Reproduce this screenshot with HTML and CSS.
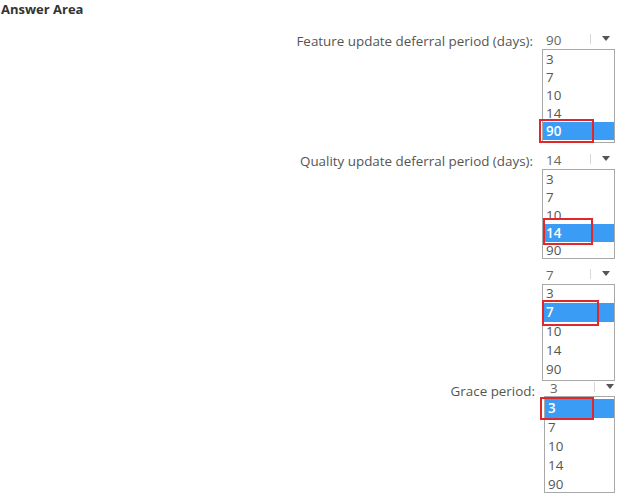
FILE: index.html
```html
<!DOCTYPE html>
<html>
<head>
<meta charset="utf-8">
<link rel="stylesheet" href="styles.css">
</head>
<body>
<div class="page">
  <h1 class="title">Answer Area</h1>
  <div class="area">
    <div class="group g1">
      <div class="label">Feature update deferral period (days):</div>
      <div class="dd">
        <div class="dd-head"><span class="val">90</span><span class="sep"></span><span class="arrow"></span></div>
        <ul class="dd-list">
          <li>3</li><li>7</li><li>10</li><li>14</li><li class="sel">90<span class="mark"></span></li>
        </ul>
      </div>
    </div>
    <div class="group g2">
      <div class="label">Quality update deferral period (days):</div>
      <div class="dd">
        <div class="dd-head"><span class="val">14</span><span class="sep"></span><span class="arrow"></span></div>
        <ul class="dd-list">
          <li>3</li><li>7</li><li>10</li><li class="sel">14<span class="mark"></span></li><li>90</li>
        </ul>
      </div>
    </div>
    <div class="group g3">
      <div class="label"></div>
      <div class="dd">
        <div class="dd-head"><span class="val">7</span><span class="sep"></span><span class="arrow"></span></div>
        <ul class="dd-list">
          <li>3</li><li class="sel">7<span class="mark"></span></li><li>10</li><li>14</li><li>90</li>
        </ul>
      </div>
    </div>
    <div class="group g4">
      <div class="label">Grace period:</div>
      <div class="dd">
        <div class="dd-head"><span class="val">3</span><span class="sep"></span><span class="arrow"></span></div>
        <ul class="dd-list">
          <li class="sel">3<span class="mark"></span></li><li>7</li><li>10</li><li>14</li><li>90</li>
        </ul>
      </div>
    </div>
  </div>
</div>
</body>
</html>
```
FILE: styles.css
```css
html, body {
  margin: 0;
  padding: 0;
  background: #ffffff;
}
.page {
  font-family: "Open Sans", "Noto Sans", sans-serif;
  color: #555;
}
.title {
  margin: 0;
  padding: 1px 0 0 1px;
  font-size: 13px;
  font-weight: 700;
  line-height: 16px;
  color: #333;
}
.area {
  display: flex;
  flex-direction: column;
  align-items: flex-end;
  padding-right: 15px;
}
.group {
  display: flex;
  align-items: flex-start;
  gap: 9px;
}
.label {
  font-size: 13.4px;
  line-height: 17px;
  color: #555;
  padding-top: 1px;
}
.dd {
  width: 73px;
}
.dd-head {
  height: 17px;
  display: flex;
  align-items: center;
  font-size: 13.4px;
  color: #666;
  padding-left: 4px;
  box-sizing: border-box;
}
.val {
  width: 44px;
  line-height: 17px;
}
.sep {
  width: 1px;
  height: 10px;
  background: #d8d8d8;
  margin-top: -4px;
}
.arrow {
  margin-left: 11px;
  margin-top: -4px;
  width: 0;
  height: 0;
  border-left: 4px solid transparent;
  border-right: 4px solid transparent;
  border-top: 5px solid #555;
}
.dd-list {
  list-style: none;
  margin: 0;
  padding: 0;
  border: 1px solid #a9a9a9;
  box-sizing: border-box;
}
.dd-list li {
  height: 18px;
  line-height: 18px;
  padding-left: 3px;
  font-size: 13.4px;
  color: #555;
  position: relative;
}
.dd-list li.sel {
  background: #3a9cf5;
  color: #fff;
  font-weight: 600;
}
.mark {
  position: absolute;
  left: -4px;
  top: -3px;
  width: 55px;
  height: 24px;
  border: 2px solid #e0282c;
  box-sizing: border-box;
}
.g1 {
  margin-top: 15px;
}
.g1 .dd-list {
  height: 94px;
}
.g2 {
  margin-top: 9px;
}
.g2 .dd-list {
  height: 90px;
}
.g2 .dd-list li:last-child {
  height: 16px;
  line-height: 16px;
}
.g2 .mark {
  left: 0;
  top: -6px;
  width: 50px;
  height: 27px;
}
.g3 {
  margin-top: 8px;
}
.g3 .dd-list {
  height: 97px;
}
.g3 .dd-list li {
  height: 19px;
  line-height: 19px;
}
.g3 .dd-list li:first-child {
  height: 18px;
  line-height: 16px;
}
.g3 .mark {
  left: -1px;
  top: -3px;
  width: 57px;
  height: 26px;
}
.g4 {
  margin-top: 0;
}
.g4 .dd-head {
  height: 15px;
  padding-left: 6px;
}
.g4 .label {
  padding-top: 3px;
  line-height: 15px;
}
.g4 .dd {
  width: 71px;
}
.g4 .dd-list {
  height: 97px;
  padding-top: 2px;
}
.g4 .dd-list li {
  height: 19px;
  line-height: 19px;
}
.g4 .mark {
  left: -5px;
  top: -2px;
  width: 54px;
  height: 23px;
}
```
